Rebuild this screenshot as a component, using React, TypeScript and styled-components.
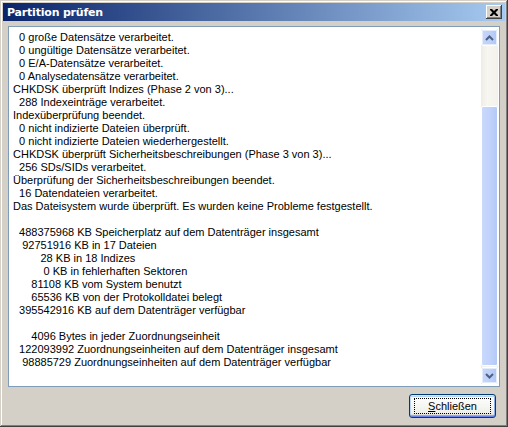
import React from 'react'
import styled, { createGlobalStyle } from 'styled-components'

const GlobalStyle = createGlobalStyle`
  html, body {
    margin: 0;
    padding: 0;
    background: #d4d0c8;
  }
  * {
    box-sizing: border-box;
  }
`

const lines = [
  '  0 große Datensätze verarbeitet.',
  '  0 ungültige Datensätze verarbeitet.',
  '  0 E/A-Datensätze verarbeitet.',
  '  0 Analysedatensätze verarbeitet.',
  'CHKDSK überprüft Indizes (Phase 2 von 3)...',
  '  288 Indexeinträge verarbeitet.',
  'Indexüberprüfung beendet.',
  '  0 nicht indizierte Dateien überprüft.',
  '  0 nicht indizierte Dateien wiederhergestellt.',
  'CHKDSK überprüft Sicherheitsbeschreibungen (Phase 3 von 3)...',
  '  256 SDs/SIDs verarbeitet.',
  'Überprüfung der Sicherheitsbeschreibungen beendet.',
  '  16 Datendateien verarbeitet.',
  'Das Dateisystem wurde überprüft. Es wurden keine Probleme festgestellt.',
  '',
  '  488375968 KB Speicherplatz auf dem Datenträger insgesamt',
  '   92751916 KB in 17 Dateien',
  '         28 KB in 18 Indizes',
  '          0 KB in fehlerhaften Sektoren',
  '      81108 KB vom System benutzt',
  '      65536 KB von der Protokolldatei belegt',
  '  395542916 KB auf dem Datenträger verfügbar',
  '',
  '      4096 Bytes in jeder Zuordnungseinheit',
  '  122093992 Zuordnungseinheiten auf dem Datenträger insgesamt',
  '   98885729 Zuordnungseinheiten auf dem Datenträger verfügbar',
]

export default function App(): JSX.Element {
  return (
    <>
      <GlobalStyle />
      <Window>
        <TitleBar>
          <Title>Partition prüfen</Title>
          <CloseButton>
            <svg width="8" height="7" viewBox="0 0 8 7">
              <path d="M0 0h2l2 2 2-2h2v1L5.5 3.5 8 6v1H6L4 5 2 7H0V6l2.5-2.5L0 1z" fill="#000" />
            </svg>
          </CloseButton>
        </TitleBar>
        <Body>
          <LogBox>
            <LogText>
              {lines.map((l, i) => (
                <Line key={i}>{l || ' '}</Line>
              ))}
            </LogText>
            <ScrollBar>
              <ScrollButton>
                <svg width="9" height="6" viewBox="0 0 9 6">
                  <path d="M1 5 4.5 1.5 8 5" fill="none" stroke="#4d6185" strokeWidth="2" />
                </svg>
              </ScrollButton>
              <Track>
                <Thumb style={{ marginTop: 60 }} />
              </Track>
              <ScrollButton>
                <svg width="9" height="6" viewBox="0 0 9 6">
                  <path d="M1 1 4.5 4.5 8 1" fill="none" stroke="#4d6185" strokeWidth="2" />
                </svg>
              </ScrollButton>
            </ScrollBar>
          </LogBox>
          <ButtonRow>
            <PushButton>
              <Focus>
                <u>S</u>chließen
              </Focus>
            </PushButton>
          </ButtonRow>
        </Body>
      </Window>
    </>
  )
}

const Window = styled.div`
  width: 508px;
  height: 427px;
  display: flex;
  flex-direction: column;
  padding: 3px;
  background: #d4d0c8;
  box-shadow: inset -1px -1px 0 #404040, inset 1px 1px 0 #d4d0c8,
    inset -2px -2px 0 #808080, inset 2px 2px 0 #ffffff;
  font-family: 'Liberation Sans', Arial, sans-serif;
  font-size: 11px;
  color: #000;
`

const TitleBar = styled.div`
  height: 18px;
  display: flex;
  align-items: center;
  justify-content: space-between;
  padding: 0 3px 0 4px;
  background: linear-gradient(to right, #0a246a, #a6caf0);
`

const Title = styled.span`
  color: #fff;
  font-family: 'DejaVu Sans', Verdana, sans-serif;
  font-weight: bold;
  font-size: 11px;
  letter-spacing: -0.2px;
`

const CloseButton = styled.div`
  width: 16px;
  height: 14px;
  display: flex;
  align-items: center;
  justify-content: center;
  background: #d4d0c8;
  box-shadow: inset -1px -1px 0 #404040, inset 1px 1px 0 #ffffff,
    inset -2px -2px 0 #808080;
`

const Body = styled.div`
  flex: 1;
  display: flex;
  flex-direction: column;
  padding: 5px 5px 6px 5px;
`

const LogBox = styled.div`
  height: 361px;
  display: flex;
  background: #fff;
  border: 1px solid #7f9db9;
  padding: 2px 1px 2px 1px;
`

const LogText = styled.div`
  flex: 1;
  padding: 2px 0 0 3px;
  overflow: hidden;
`

const Line = styled.div`
  white-space: pre;
  height: 13px;
  line-height: 13px;
`

const ScrollBar = styled.div`
  width: 17px;
  display: flex;
  flex-direction: column;
  background: linear-gradient(to right, #eeede5, #f7f6f1 40%, #f3f1ec);
`

const ScrollButton = styled.div`
  height: 17px;
  display: flex;
  align-items: center;
  justify-content: center;
  border: 1px solid #ffffff;
  border-radius: 2px;
  background: linear-gradient(to right, #c8d6f8, #bcd0fa 60%, #b0c6f5);
  box-shadow: 0 0 0 1px #e4ebfb inset;
`

const Track = styled.div`
  flex: 1;
  display: flex;
  flex-direction: column;
`

const Thumb = styled.div`
  flex: 1;
  margin-bottom: 1px;
  border: 1px solid #ffffff;
  border-radius: 2px;
  background: linear-gradient(to right, #c9d8fc, #c1d3fb 50%, #b4c9f7);
`

const ButtonRow = styled.div`
  flex: 1;
  display: flex;
  justify-content: flex-end;
  align-items: flex-end;
  padding-right: 4px;
`

const PushButton = styled.div`
  width: 87px;
  height: 24px;
  padding: 3px 4px;
  border: 1px solid #003c74;
  border-radius: 3px;
  background: linear-gradient(#ffffff, #f0f0ea 80%, #d6d0c5);
  box-shadow: inset 0 1px 0 #cee7ff, inset 0 -1px 0 #6982ee, inset 1px 0 0 #bcd4f6,
    inset -1px 0 0 #89ade4, inset 0 2px 0 #bcd4f6, inset 0 -2px 0 #89ade4;
  display: flex;
`

const Focus = styled.div`
  flex: 1;
  display: flex;
  align-items: center;
  justify-content: center;
  outline: 1px dotted #000;
  outline-offset: -1px;
  line-height: 13px;
`
